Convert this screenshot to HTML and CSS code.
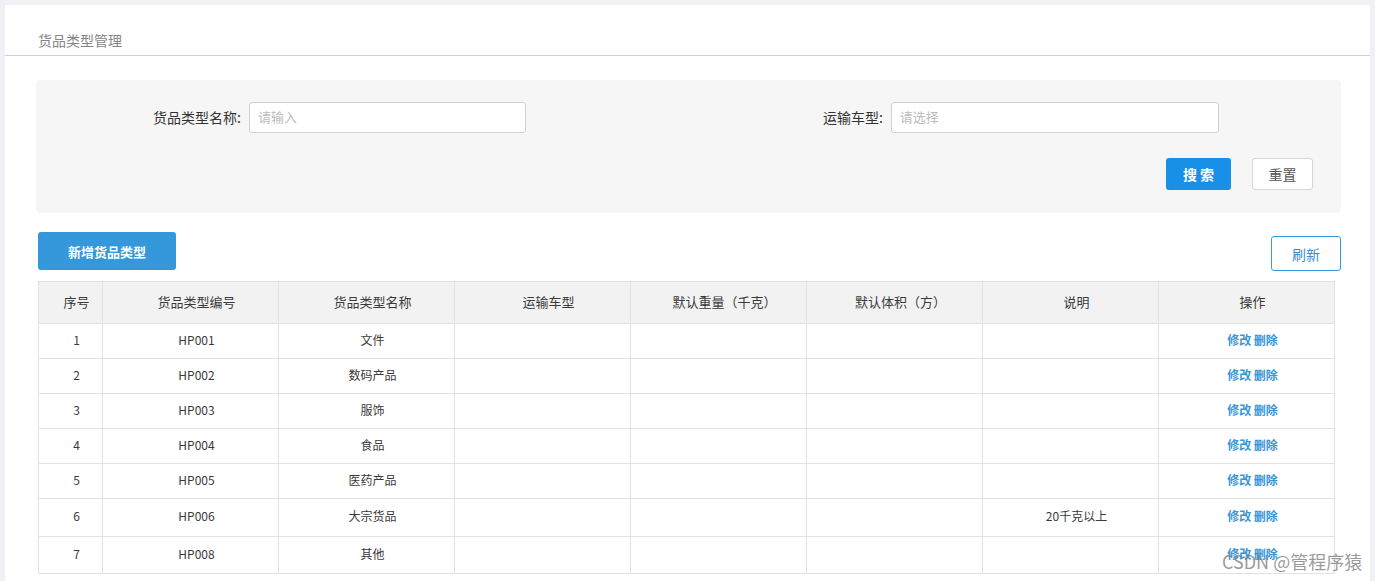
FILE: index.html
```html
<!DOCTYPE html>
<html lang="zh">
<head>
<meta charset="utf-8">
<link rel="stylesheet" href="styles.css">
</head>
<body>
<div class="page">
  <div class="card">
    <div class="title-bar"><span class="title">货品类型管理</span></div>
    <div class="search-panel">
      <div class="search-row">
        <div class="field field-name">
          <label>货品类型名称:</label>
          <div class="input placeholder">请输入</div>
        </div>
        <div class="field field-car">
          <label>运输车型:</label>
          <div class="input placeholder">请选择</div>
        </div>
      </div>
      <div class="btn-row">
        <button class="btn btn-search">搜 索</button>
        <button class="btn btn-reset">重置</button>
      </div>
    </div>
    <div class="toolbar">
      <button class="btn btn-add">新增货品类型</button>
      <button class="btn btn-refresh">刷新</button>
    </div>
    <table class="grid">
      <colgroup>
        <col class="c-idx"><col><col><col><col><col><col><col>
      </colgroup>
      <thead>
        <tr><th>序号</th><th>货品类型编号</th><th>货品类型名称</th><th>运输车型</th><th>默认重量（千克）</th><th>默认体积（方）</th><th>说明</th><th>操作</th></tr>
      </thead>
      <tbody>
        <tr><td>1</td><td>HP001</td><td>文件</td><td></td><td></td><td></td><td></td><td class="ops"><a>修改</a> <a>删除</a></td></tr>
        <tr><td>2</td><td>HP002</td><td>数码产品</td><td></td><td></td><td></td><td></td><td class="ops"><a>修改</a> <a>删除</a></td></tr>
        <tr><td>3</td><td>HP003</td><td>服饰</td><td></td><td></td><td></td><td></td><td class="ops"><a>修改</a> <a>删除</a></td></tr>
        <tr><td>4</td><td>HP004</td><td>食品</td><td></td><td></td><td></td><td></td><td class="ops"><a>修改</a> <a>删除</a></td></tr>
        <tr><td>5</td><td>HP005</td><td>医药产品</td><td></td><td></td><td></td><td></td><td class="ops"><a>修改</a> <a>删除</a></td></tr>
        <tr class="tall"><td>6</td><td>HP006</td><td>大宗货品</td><td></td><td></td><td></td><td>20千克以上</td><td class="ops"><a>修改</a> <a>删除</a></td></tr>
        <tr class="tall2"><td>7</td><td>HP008</td><td>其他</td><td></td><td></td><td></td><td></td><td class="ops"><a>修改</a> <a>删除</a></td></tr>
      </tbody>
    </table>
  </div>
  <div class="watermark">CSDN @管程序猿</div>
</div>
</body>
</html>
```

FILE: styles.css
```css
* { box-sizing: border-box; }
html, body { margin: 0; padding: 0; }
body {
  background: #f0f1f5;
  font-family: "Noto Sans CJK SC", "Noto Sans", sans-serif;
  font-size: 12px;
  color: #333;
  width: 1375px;
  height: 581px;
  overflow: hidden;
}
.page {
  position: relative;
  padding: 5px 5px 0 5px;
  height: 581px;
}
.card {
  background: #fff;
  height: 576px;
}
.title-bar {
  height: 51px;
  border-bottom: 1px solid #cfcfcf;
  padding: 25px 0 0 33px;
}
.title {
  font-size: 14px;
  color: #858585;
  line-height: 20px;
}
.search-panel {
  margin: 24px 29px 0 31px;
  background: #f6f6f6;
  border-radius: 4px;
  height: 133px;
  padding-top: 22px;
}
.search-row {
  display: flex;
  height: 31px;
}
.field {
  display: flex;
  align-items: center;
}
.field label {
  color: #333;
  font-size: 14px;
  margin-right: 8px;
  padding-bottom: 2px;
}
.field-name { margin-left: 117px; }
.field-name .input { width: 277px; }
.field-car { margin-left: 297px; }
.field-car .input { width: 328px; }
.input {
  height: 31px;
  background: #fff;
  border: 1px solid #d0d0d0;
  border-radius: 3px;
  padding: 0 8px;
  line-height: 28px;
  font-size: 13px;
}
.placeholder { color: #bcbcbc; }
.btn-row {
  display: flex;
  justify-content: flex-end;
  gap: 21px;
  margin-top: 25px;
  padding-right: 28px;
}
.btn {
  font-family: inherit;
  cursor: pointer;
  border-radius: 3px;
  padding: 0;
}
.btn-search {
  width: 65px;
  height: 32px;
  background: #1890e8;
  border: none;
  color: #fff;
  font-weight: bold;
  font-size: 14px;
}
.btn-reset {
  width: 61px;
  height: 32px;
  background: #fff;
  border: 1px solid #d6d6d6;
  color: #555;
  font-size: 14px;
}
.toolbar {
  display: flex;
  justify-content: space-between;
  align-items: flex-start;
  margin: 19px 29px 0 33px;
  height: 49px;
}
.btn-add {
  width: 138px;
  height: 38px;
  background: #3498db;
  border: none;
  color: #fff;
  font-weight: bold;
  font-size: 13px;
}
.btn-refresh {
  margin-top: 4px;
  width: 70px;
  height: 35px;
  background: #fff;
  border: 1px solid #3a9ad9;
  color: #3a8fd4;
  font-size: 14px;
}
.grid {
  margin-left: 33px;
  border-collapse: collapse;
  table-layout: fixed;
  width: 1297px;
}
.grid col { width: 176px; }
.grid col.c-idx { width: 64px; }
.grid th, .grid td {
  border: 1px solid #e2e2e2;
  text-align: center;
  font-weight: normal;
  padding: 0 0 4px 12px;
  font-size: 12px;
  color: #3a3a3a;
}
.grid th {
  background: #f2f2f2;
  height: 42px;
  font-size: 13px;
  padding-bottom: 2px;
}
.grid td { height: 35px; }
.grid tr.tall td { height: 38px; }
.grid tr.tall2 td { height: 37px; }
.ops a {
  color: #3a95d8;
  font-weight: bold;
}
.watermark {
  position: absolute;
  left: 1222px;
  top: 548px;
  font-size: 18px;
  color: rgba(120,120,120,0.75);
  font-family: "Noto Sans CJK SC", sans-serif;
  white-space: nowrap;
}
```
